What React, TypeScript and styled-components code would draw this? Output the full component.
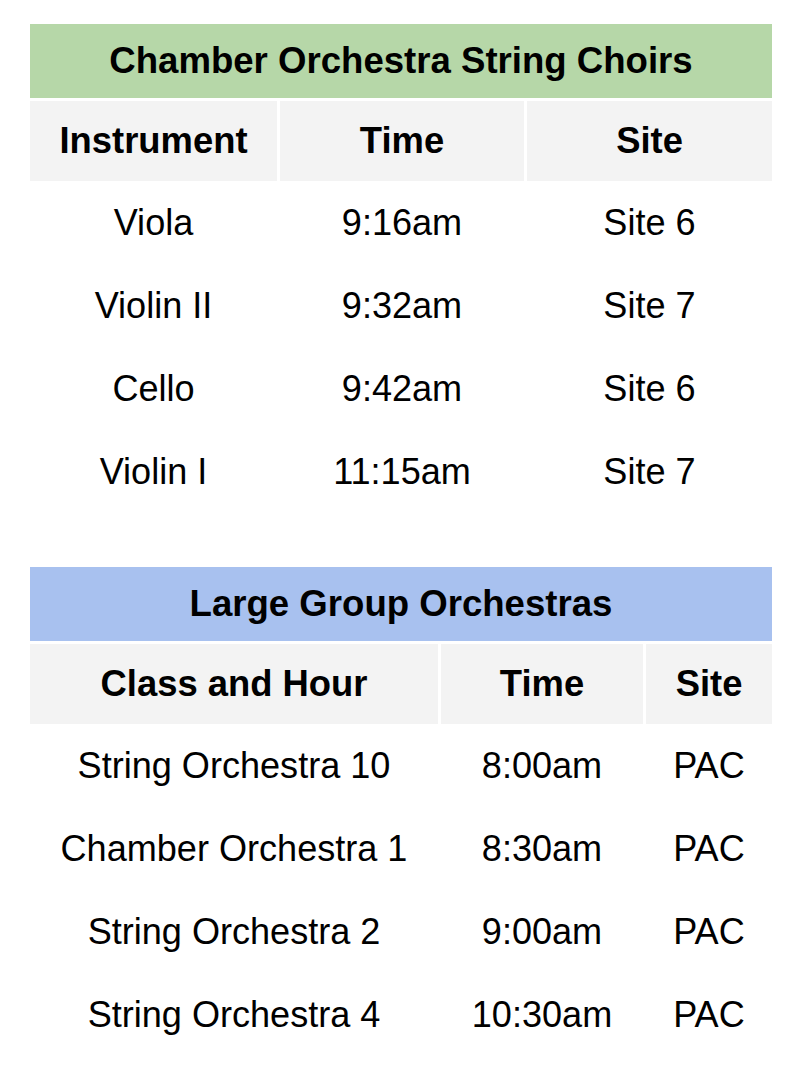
import React from "react";
import styled, { createGlobalStyle } from "styled-components";

const Global = createGlobalStyle`
  html, body { margin: 0; padding: 0; background: #ffffff; }
  body { font-family: "Liberation Sans", Arial, sans-serif; color: #000000; }
`;

const Page = styled.div`
  display: flex;
  flex-direction: column;
  gap: 54px;
  padding: 24px 37px 31px 30px;
  width: 742px;
`;

const Table = styled.section`
  display: flex;
  flex-direction: column;
`;

const Title = styled.div<{ $bg: string }>`
  height: 74px;
  margin-bottom: 3px;
  background: ${(p) => p.$bg};
  display: flex;
  align-items: center;
  justify-content: center;
  font-size: 36.6px;
  font-weight: 700;
`;

const Row = styled.div<{ $cols: string; $header?: boolean }>`
  display: grid;
  grid-template-columns: ${(p) => p.$cols};
  column-gap: 3px;
  height: ${(p) => (p.$header ? "80px" : "83px")};
`;

const Cell = styled.div<{ $header?: boolean }>`
  display: flex;
  align-items: center;
  justify-content: center;
  font-size: ${(p) => (p.$header ? "36.4px" : "36.1px")};
  white-space: nowrap;
  font-weight: ${(p) => (p.$header ? 700 : 400)};
  background: ${(p) => (p.$header ? "#f3f3f3" : "transparent")};
`;

type TableData = {
  title: string;
  color: string;
  cols: string;
  headers: string[];
  rows: string[][];
};

const tables: TableData[] = [
  {
    title: "Chamber Orchestra String Choirs",
    color: "#b6d7a8",
    cols: "247px 244px 245px",
    headers: ["Instrument", "Time", "Site"],
    rows: [
      ["Viola", "9:16am", "Site 6"],
      ["Violin II", "9:32am", "Site 7"],
      ["Cello", "9:42am", "Site 6"],
      ["Violin I", "11:15am", "Site 7"],
    ],
  },
  {
    title: "Large Group Orchestras",
    color: "#a8c1ef",
    cols: "408px 202px 126px",
    headers: ["Class and Hour", "Time", "Site"],
    rows: [
      ["String Orchestra 10", "8:00am", "PAC"],
      ["Chamber Orchestra 1", "8:30am", "PAC"],
      ["String Orchestra 2", "9:00am", "PAC"],
      ["String Orchestra 4", "10:30am", "PAC"],
    ],
  },
];

export default function App() {
  return (
    <>
      <Global />
      <Page>
        {tables.map((t) => (
          <Table key={t.title}>
            <Title $bg={t.color}>{t.title}</Title>
            <Row $cols={t.cols} $header>
              {t.headers.map((h) => (
                <Cell key={h} $header>
                  {h}
                </Cell>
              ))}
            </Row>
            {t.rows.map((r, i) => (
              <Row key={i} $cols={t.cols}>
                {r.map((c, j) => (
                  <Cell key={j}>{c}</Cell>
                ))}
              </Row>
            ))}
          </Table>
        ))}
      </Page>
    </>
  );
}
